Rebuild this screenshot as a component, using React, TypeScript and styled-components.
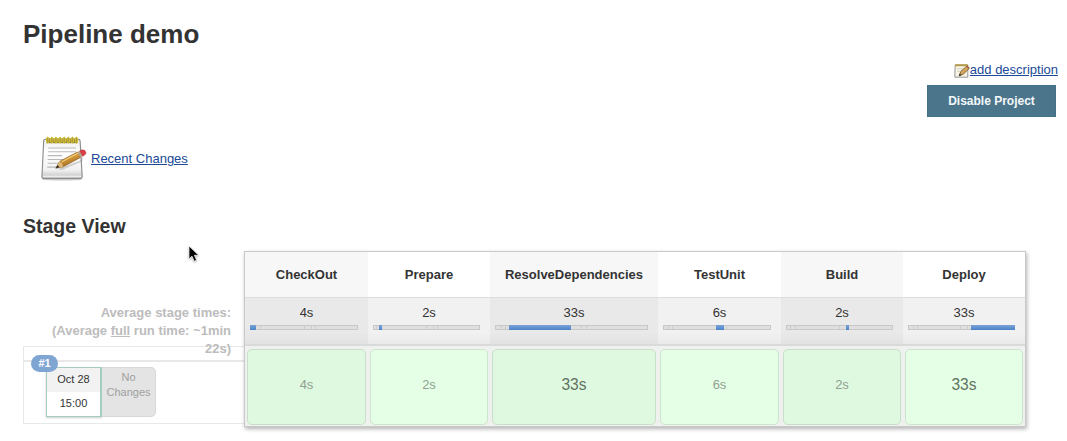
import * as React from 'react'
import styled, { createGlobalStyle } from 'styled-components'

type Stage = {
  name: string
  time: string
  width: number
  offset: number
  length: number
  ticks: number[]
  strong?: boolean
}

const stages: Stage[] = [
  { name: 'CheckOut', time: '4s', width: 123, offset: 0, length: 6, ticks: [9, 53, 60, 64] },
  { name: 'Prepare', time: '2s', width: 122, offset: 6, length: 3, ticks: [2, 52, 59, 63] },
  { name: 'ResolveDependencies', time: '33s', width: 168, offset: 14, length: 62, ticks: [5, 9, 85, 90], strong: true },
  { name: 'TestUnit', time: '6s', width: 123, offset: 53, length: 8, ticks: [4, 8, 62] },
  { name: 'Build', time: '2s', width: 122, offset: 60, length: 3, ticks: [3, 8, 52] },
  { name: 'Deploy', time: '33s', width: 122, offset: 63, length: 44, ticks: [4, 8, 51, 58], strong: true },
]

const App = () => (
  <>
    <GlobalStyle />
    <Page>
      <Title>Pipeline demo</Title>
      <Actions>
        <Description>
          <NotepadSmall />
          <Link href="#">add description</Link>
        </Description>
        <Button>Disable Project</Button>
      </Actions>
      <Changes>
        <Notepad />
        <Link href="#">Recent Changes</Link>
      </Changes>
      <Subtitle>Stage View</Subtitle>
      <StageView>
        <Side>
          <Averages>
            Average stage times:
            <br />
            (Average <u>full</u> run time: ~1min 22s)
          </Averages>
          <Run>
            <RunStripe />
            <RunBody>
              <Badge>#1</Badge>
              <RunDate>
                <Day>Oct 28</Day>
                <Hour>15:00</Hour>
              </RunDate>
              <NoChanges>
                No
                <br />
                Changes
              </NoChanges>
            </RunBody>
          </Run>
        </Side>
        <Table>
          {stages.map((stage, i) => (
            <Column key={stage.name} $width={stage.width}>
              <Header $odd={i % 2 === 0}>{stage.name}</Header>
              <Average $odd={i % 2 === 0}>
                {stage.time}
                <Track>
                  {stage.ticks.map(tick => (
                    <Tick key={tick} style={{ left: tick }} />
                  ))}
                  <Bar style={{ left: stage.offset - 1, width: stage.length }} />
                </Track>
              </Average>
              <Cell>
                <Tile $odd={i % 2 === 0} $strong={stage.strong}>
                  {stage.time}
                </Tile>
              </Cell>
            </Column>
          ))}
        </Table>
      </StageView>
      <Cursor viewBox="0 0 12 18">
        <path
          d="M1 1v13l3-2.8 2.2 5 2.4-1-2.2-4.9h4.3z"
          fill="#000"
          stroke="#fff"
          strokeWidth=".7"
        />
      </Cursor>
    </Page>
  </>
)

const Notepad = () => (
  <NotepadIcon viewBox="0 0 48 48">
    <defs>
      <linearGradient id="paper" x1="0" y1="0" x2="0" y2="1">
        <stop offset="0" stopColor="#f0f0f0" />
        <stop offset=".35" stopColor="#fff" />
        <stop offset=".78" stopColor="#f1f1f1" />
        <stop offset="1" stopColor="#bdbdbd" />
      </linearGradient>
      <linearGradient id="wood" x1="0" y1="0" x2=".5" y2="1">
        <stop offset="0" stopColor="#f0c870" />
        <stop offset=".5" stopColor="#d69b3c" />
        <stop offset="1" stopColor="#93601d" />
      </linearGradient>
    </defs>
    <ellipse cx="22" cy="45" rx="21" ry="1.8" fill="#ddd" />
    <path
      d="M4.5 3.5h34.5q1.6 0 1.8 1.5l2.2 37.5q0 2-2 2H3q-2 0-2-2l1.8-37.5q.2-1.5 1.7-1.5z"
      fill="url(#paper)"
      stroke="#8d8d8d"
      strokeWidth="1.2"
    />
    <path d="M2 42h40" stroke="#fafafa" strokeWidth="1" />
    <path
      d="M7.5 12.5h29M7.5 16.5h29M7 20.5h15M7 24.5h22M7 28.5h13M6.5 32.5h10"
      stroke="#b9b9b9"
      strokeWidth="1.1"
    />
    <path d="M5.5 2.5h33v5h-33z" fill="#8a7c2e" />
    {[7, 11.3, 15.6, 19.9, 24.2, 28.5, 32.8, 37].map(x => (
      <ellipse
        key={x}
        cx={x}
        cy="4.3"
        rx="1.4"
        ry="3.2"
        fill="#a99a3c"
        stroke="#dccb3c"
        strokeWidth="1"
      />
    ))}
    <path d="M17 34.5l24-9 3-4-1 5-21 9z" fill="#777" opacity=".3" />
    <path
      d="M15.5 33.5l4-7L38 16.8l3.2 5.6L23 32.2z"
      fill="url(#wood)"
      stroke="#8b5d20"
      strokeWidth=".7"
    />
    <path d="M15.5 33.5l4-7q2.9 1.6 3.5 5.7z" fill="#dfb878" />
    <path d="M15.2 33.8l2.1-3.5 2 2.2z" fill="#292522" />
    <path d="M21.5 27L38.5 18" stroke="#f8dc8c" strokeWidth="1" />
    <path d="M38 16.8l2.6-1.4 3.2 5.6-2.6 1.4z" fill="#b9a58f" />
    <path
      d="M40.4 15.5l1.9-1q3.8-.4 4.5 2.4.4 1.8-1.2 2.9l-2 1.2z"
      fill="#dc3f43"
      stroke="#b0363a"
      strokeWidth=".5"
    />
  </NotepadIcon>
)

const NotepadSmall = () => (
  <SmallIcon viewBox="0 0 16 16">
    <path d="M1.2 2.2h12.6v12H.8z" fill="#f6f3e4" stroke="#979797" />
    <path d="M1 2.2h12.8" stroke="#b79b4c" strokeWidth="2" />
    <path d="M3 5.8h6M3 8.3h4" stroke="#cfcab8" strokeWidth=".8" />
    <path
      d="M5.2 12.8l1.6-4.3 6-5.5 2.4 2.4-6 5.8z"
      fill="#d5a65a"
      stroke="#86693c"
      strokeWidth="1"
    />
    <path d="M4.8 13.2l1-2.7 1.7 1.6z" fill="#333" />
    <path d="M12.2 3.5l1.2-1.1 2.2 2.3-1.2 1.1z" fill="#9d5a3e" />
  </SmallIcon>
)

export default App

const GlobalStyle = createGlobalStyle`
  * {
    box-sizing: border-box;
  }

  body {
    margin: 0;
    background: #fff;
    color: #333;
    font: 13px/18px 'Liberation Sans', Arial, sans-serif;
    overflow: hidden;
  }
`

const Page = styled.main`
  position: relative;
  width: 1067px;
  height: 441px;
  padding: 19px 9px 0 23px;
`

const Title = styled.h1`
  margin: 0;
  font-size: 26px;
  line-height: 30px;
`

const Actions = styled.div`
  display: flex;
  flex-flow: column;
  align-items: flex-end;
  margin-top: 12px;
`

const Description = styled.div`
  display: flex;
  height: 18px;
`

const Link = styled.a`
  color: #204a97;
  text-decoration: underline;
`

const Button = styled.button`
  width: 129px;
  height: 32px;
  margin: 6px 2px 0 0;
  padding: 0;
  border: 1px solid #44708a;
  background: #4b758b;
  color: #f4f8fa;
  font: bold 12px 'Liberation Sans', Arial, sans-serif;
`

const Changes = styled.div`
  display: flex;
  align-items: center;
  height: 48px;
  margin-top: 18px;
  padding-left: 18px;
`

const NotepadIcon = styled.svg`
  width: 46px;
  height: 48px;
  margin-right: 4px;
`

const SmallIcon = styled.svg`
  width: 16px;
  height: 16px;
  margin-top: 2px;
`

const Subtitle = styled.h2`
  margin: 31px 0 0;
  font-size: 19.5px;
  line-height: 24px;
`

const StageView = styled.section`
  display: flex;
  margin-top: 13px;
`

const Side = styled.div`
  width: 221px;
`

const Averages = styled.div`
  height: 95px;
  padding: 53px 13px 0 20px;
  color: #bcbcbc;
  font-weight: bold;
  text-align: right;
`

const Run = styled.div`
  height: 78px;
  border: 1px solid #e5e9e8;
  border-right: 0;
`

const RunStripe = styled.div`
  height: 15px;
  border-bottom: 2px solid #e8e8e8;
`

const RunBody = styled.div`
  position: relative;
  display: flex;
  padding: 5px 0 0 22px;
`

const Badge = styled.span`
  position: absolute;
  top: -7px;
  left: 7px;
  width: 27px;
  height: 17px;
  border-radius: 9px;
  background: #7fa5d3;
  color: #fff;
  font-size: 11px;
  font-weight: bold;
  line-height: 17px;
  text-align: center;
`

const RunDate = styled.div`
  width: 56px;
  height: 50px;
  border: 1px solid #a5cdbf;
  border-right-width: 2px;
  box-shadow: 0 1px 2px rgba(0, 0, 0, 0.2);
  font-size: 11px;
  text-align: center;
`

const Day = styled.div`
  height: 24px;
  background: #f2f2f2;
  line-height: 22px;
`

const Hour = styled.div`
  background: #fff;
  line-height: 22px;
`

const NoChanges = styled.div`
  width: 54px;
  height: 50px;
  padding-top: 2px;
  border: 1px solid #d8d8d8;
  border-left: 0;
  border-radius: 0 5px 5px 0;
  background: #e4e4e4;
  color: #a0a0a0;
  font-size: 11px;
  line-height: 15px;
  text-align: center;
`

const Table = styled.div`
  display: flex;
  width: 782px;
  height: 176px;
  border: 1px solid #c9c9c9;
  box-shadow: 1px 2px 4px rgba(0, 0, 0, 0.3);
`

const Column = styled.div<{ $width: number }>`
  width: ${p => p.$width}px;
`

const Header = styled.div<{ $odd: boolean }>`
  height: 45px;
  background: ${p => (p.$odd ? '#f7f7f7' : '#fff')};
  font-weight: bold;
  line-height: 46px;
  text-align: center;
`

const Average = styled.div<{ $odd: boolean }>`
  height: 49px;
  padding: 6px 10px 0 5px;
  border-top: 1px solid #ddd;
  border-bottom: 2px solid #dadada;
  background: ${p =>
    p.$odd
      ? 'linear-gradient(#e9e9e9 75%, #e2e2e2)'
      : 'linear-gradient(#f1f1f1 75%, #eaeaea)'};
  text-align: center;
  text-indent: 5px;
`

const Track = styled.div`
  position: relative;
  height: 5px;
  margin-top: 3px;
  border: 1px solid #c8c8c8;
  background: #dfdfdf;
`

const Tick = styled.i`
  position: absolute;
  top: 0;
  width: 1px;
  height: 3px;
  background: #cdcdcd;
`

const Bar = styled.i`
  position: absolute;
  top: -1px;
  height: 5px;
  background: linear-gradient(#7ba3d6, #4b83c9);
`

const Cell = styled.div`
  height: 80px;
  padding: 3px 2px 1px;
  background: #eef1ee;
`

const Tile = styled.div<{ $odd: boolean; $strong?: boolean }>`
  height: 76px;
  border: 1px solid ${p => (p.$odd ? '#c9dfc9' : '#cde4cd')};
  border-radius: 5px;
  background: ${p => (p.$odd ? '#dff9e0' : '#e5ffe7')};
  color: ${p => (p.$strong ? '#617262' : '#8fa190')};
  font-size: ${p => (p.$strong ? 15.6 : 13)}px;
  line-height: 70px;
  text-align: center;
`

const Cursor = styled.svg`
  position: absolute;
  top: 245px;
  left: 188px;
  width: 12px;
  height: 18px;
  filter: drop-shadow(0 1px 1px rgba(0, 0, 0, 0.3));
`
